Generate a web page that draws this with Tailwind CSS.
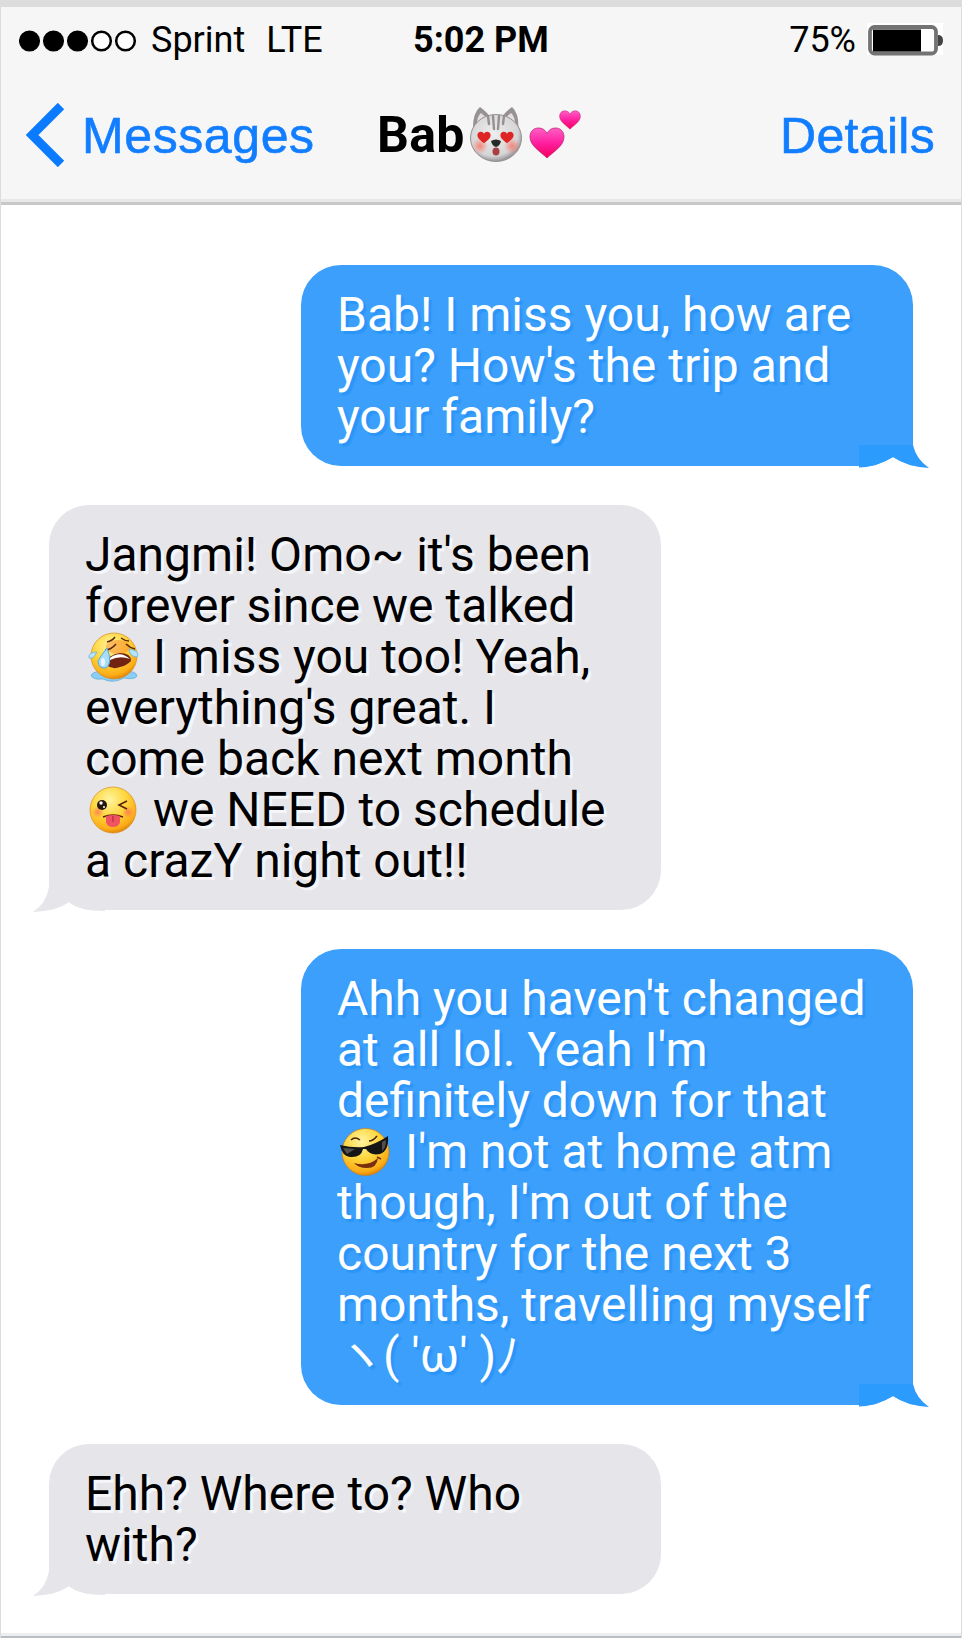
<!DOCTYPE html>
<html lang="en">
<head>
  <meta charset="UTF-8" />
  <meta name="viewport" content="width=device-width, initial-scale=1.0"/>
  <title>Messages - Bab</title>
  <script src="https://cdn.jsdelivr.net/npm/@tailwindcss/browser@4"></script>
</head>
<body class="bg-white text-black font-[Roboto,'Noto_Sans_CJK_JP',sans-serif]">

<!-- Shared gradients and shapes -->
<svg class="absolute w-0 h-0" aria-hidden="true">
  <defs>
    <radialGradient id="face" cx="42%" cy="28%" r="75%">
      <stop offset="0" stop-color="#fff5a0"/>
      <stop offset=".5" stop-color="#ffd53c"/>
      <stop offset=".85" stop-color="#fbac16"/>
      <stop offset="1" stop-color="#d97a08"/>
    </radialGradient>
    <radialGradient id="fur" cx="45%" cy="40%" r="60%">
      <stop offset="0" stop-color="#eeeeee"/>
      <stop offset=".8" stop-color="#d6d5d6"/>
      <stop offset="1" stop-color="#979395"/>
    </radialGradient>
    <radialGradient id="blush">
      <stop offset="0" stop-color="#ff6a5a" stop-opacity=".75"/>
      <stop offset="1" stop-color="#ff6a5a" stop-opacity="0"/>
    </radialGradient>
    <linearGradient id="pink" x1="0" y1="0" x2="0" y2="1">
      <stop offset="0" stop-color="#ff5fc6"/>
      <stop offset=".5" stop-color="#ff1fa0"/>
      <stop offset="1" stop-color="#f5005a"/>
    </linearGradient>
    <symbol id="heart" viewBox="0 0 36 32">
      <path d="M18 31C12 25 1 19 1 10C1 4 5 1 9.500 1C13.500 1 16.500 3 18 6.500C19.500 3 22.500 1 26.500 1C31 1 35 4 35 10C35 19 24 25 18 31Z"/>
    </symbol>
  </defs>
</svg>

<div class="flex h-[1638px] w-[962px] flex-col border-x border-[#dcdcdc]">

  <!-- Header -->
  <header class="flex h-[205px] flex-col border-t-[7px] border-b-[3px] border-t-[#dcdcdc] border-b-[#c8c8c8] bg-[#f6f6f6]">
    <!-- Status bar -->
    <div class="flex h-[65px] items-center pl-[18px] pr-[18px] text-[36px] leading-[65px]">
      <div class="flex w-[394px] items-center">
        <svg class="mt-[3px] h-[22px] w-[118px]" viewBox="0 0 118 22">
          <g stroke="#000" stroke-width="2.500">
            <circle cx="10.500" cy="11" r="9.300"/>
            <circle cx="34.500" cy="11" r="9.300"/>
            <circle cx="58.500" cy="11" r="9.300"/>
            <circle cx="82.500" cy="11" r="9.300" fill="#fff"/>
            <circle cx="106.500" cy="11" r="9.300" fill="#fff"/>
          </g>
        </svg>
        <span class="ml-[14px] mt-[2px]">Sprint</span>
        <span class="ml-[21px] mt-[2px]">LTE</span>
      </div>
      <span class="mt-[2px] font-bold">5:02 PM</span>
      <span class="ml-auto mt-[2px]">75%</span>
      <svg class="ml-[10px] h-[34px] w-[77px]" viewBox="0 0 77 34">
        <path d="M1 0H77V32H1Z" fill="#fff"/>
        <rect x="4" y="4" width="66" height="26.500" rx="4.500" fill="#fff" stroke="#737373" stroke-width="3.800"/>
        <path d="M7 6.500H55V28.500H7Z"/>
        <path d="M72 12Q77 12 77 17.500Q77 23 72 23Z" fill="#444"/>
      </svg>
    </div>
    <!-- Navigation bar -->
    <div class="flex h-[130px] items-center border-b-[3px] border-[#e8e8e8] pl-[25px] pr-[26px]">
      <a class="flex w-[351px] items-center text-[#117dff]">
        <svg class="-mt-[1px] h-[64px] w-[39px]" viewBox="0 0 39 64"><path d="M35 3L6 32L35 61" fill="none" stroke="#0a7aff" stroke-width="9"/></svg>
        <span class="ml-[17px] mt-[2px] font-['Liberation_Sans',sans-serif] text-[50px] tracking-[0.6px] [-webkit-text-stroke:0.6px_#117dff]">Messages</span>
      </a>
      <h1 class="flex items-center text-[50px] font-bold">
        <span class="tracking-[0.3px]">Bab</span>
        <svg class="-mt-[4px] ml-[4px] h-[58px] w-[54px]" viewBox="0 0 54 58">
          <path d="M4 28Q3 8 11 2Q17 6 24 15L30 15Q37 6 43 2Q51 9 49 28Z" fill="#989194"/>
          <path d="M8 20Q8 11 12 8Q16 11 18 14ZM46 20Q46 11 42 8Q38 11 36 14Z" fill="#e5dedf"/>
          <ellipse cx="27" cy="33" rx="25.500" ry="23.500" fill="url(#fur)" stroke="#969193"/>
          <path d="M19 11L20 19M24 11L25 24M30 11L29 24M35 11L34 19" stroke="#969093" stroke-width="2.400" stroke-linecap="round"/>
          <circle cx="11" cy="41" r="8" fill="url(#blush)"/><circle cx="43" cy="41" r="8" fill="url(#blush)"/>
          <use href="#heart" x="8" y="26" width="14" height="13" fill="#df2424"/>
          <use href="#heart" x="31" y="26" width="14" height="13" fill="#df2424"/>
          <path d="M22 36Q27 33 32 36Q31 41 27 42Q23 41 22 36Z" fill="#292929"/>
          <ellipse cx="27" cy="46.500" rx="3.500" ry="4" fill="#a93f43"/>
        </svg>
        <svg class="-mt-[4px] ml-[5px] h-[52px] w-[54px]" viewBox="0 0 54 52">
          <g fill="url(#pink)" stroke="#bd2877" stroke-width=".8">
            <use href="#heart" x="1" y="19" width="36" height="32"/>
            <use href="#heart" x="31" y="2" width="22" height="20"/>
          </g>
        </svg>
      </h1>
      <a class="ml-auto mt-[2px] font-['Liberation_Sans',sans-serif] text-[50px] tracking-[0.3px] text-[#117dff] [-webkit-text-stroke:0.6px_#117dff]">Details</a>
    </div>
  </header>

  <!-- Conversation -->
  <main class="flex flex-1 flex-col gap-[39px] border-b-2 border-[#b9bec2] px-[48px] pt-[60px] text-[48px] leading-[51px]">

    <div class="relative h-[201px] w-[612px] self-end rounded-[40px] rounded-br-none bg-[#3b9ffb] px-[36px] py-[24px] whitespace-nowrap text-white [text-shadow:3px_3px_1px_#2b95f8]">
      Bab! I miss you, how are<br>you? How's the trip and<br>your family?
      <svg class="absolute left-[558px] top-[180px] h-[24px] w-[71px]" viewBox="0 0 71 24">
        <path d="M0 22Q18 22 34 12Q49 22 70 23L70 24H0Z" fill="#fff"/>
        <path d="M0 0H54Q57 14 70 23Q49 22 34 12Q18 22 0 22.500Z" fill="#2b9bfd"/>
      </svg>
    </div>

    <div class="relative h-[405px] w-[612px] rounded-[40px] rounded-bl-none bg-[#e5e5ea] px-[36px] py-[24px] whitespace-nowrap [text-shadow:3px_3px_1px_#f6f6f8]">
      Jangmi! Omo~ it's been<br>forever since we talked<br><svg class="-my-[6px] ml-[3px] mr-[2px] inline-block h-[50px] w-[51px] align-[-3px]" viewBox="0 0 51 50">
        <path d="M3 43Q7 38 17 40Q26 42 35 40Q48 38 49 44Q47 48 36 46Q25 52 15 47Q4 48 3 43Z" fill="#8bcdf5" stroke="#5aa8da" stroke-width=".7"/>
        <circle cx="26" cy="24" r="23" fill="url(#face)" stroke="#d78b1c" stroke-width=".7"/>
        <ellipse cx="30" cy="15" rx="12" ry="7" fill="#fb7b20" opacity=".45"/>
        <path d="M19 10Q24 9 27 5M33 6Q37 9 41 9M17 18Q23 18 28 12M38 12Q42 16 47 17" fill="none" stroke="#5b2a08" stroke-width="1.500"/>
        <path d="M18 33Q20 22 32 21Q43 21 43 29Q38 34 32 35Q25 38 18 33Z" fill="#712412"/>
        <path d="M22 26Q32 18 42 27Q32 23 22 28Z" fill="#fff"/>
        <path d="M19 16Q25 31 18 36Q10 37 10 29Q12 25 19 16Z" fill="#a8dcf7" stroke="#57a9d7"/>
        <path d="M9 20Q0 20 1 26Q5 28 9 20ZM41 17Q42 25 49 25Q53 19 41 17Z" fill="#b5e4fb" stroke="#68b4dd" stroke-width=".8"/>
        <ellipse cx="15" cy="30" rx="2" ry="4" fill="#fff" opacity=".75"/>
      </svg> I miss you too! Yeah,<br>everything's great. I<br>come back next month<br><svg class="-my-[6px] ml-[3px] mr-[2px] inline-block h-[50px] w-[51px] align-[-3px]" viewBox="0 0 51 50">
        <circle cx="25" cy="25" r="23" fill="url(#face)" stroke="#d78b1c" stroke-width=".7"/>
        <circle cx="10" cy="27" r="6" fill="url(#blush)"/><circle cx="40" cy="27" r="6" fill="url(#blush)"/>
        <circle cx="14" cy="20" r="5" fill="#26180f"/><circle cx="13" cy="18" r="1.700" fill="#fff"/><circle cx="16" cy="22" r="1" fill="#fff"/>
        <path d="M39 16L31 20L39 24M15 32Q25 28 35 32" fill="none" stroke="#5b2308" stroke-width="1.600"/>
        <path d="M18 31Q25 29 32 31V37Q31 42 25 42Q19 42 18 37Z" fill="#f05461"/>
        <path d="M25 31V37" stroke="#b92b3b" stroke-width="1.200"/>
      </svg> we NEED to schedule<br>a crazY night out!!
      <svg class="absolute left-[-16px] top-[382px] h-[26px] w-[72px]" viewBox="0 0 72 26">
        <path d="M0 26Q23 24 36 15Q47 24 72 24V26Z" fill="#fff"/>
        <path d="M16 0Q13 17 0 25Q23 24 36 15Q47 24 72 24V0Z" fill="#e5e5ea"/>
      </svg>
    </div>

    <div class="relative h-[456px] w-[612px] self-end rounded-[40px] rounded-br-none bg-[#3b9ffb] px-[36px] py-[24px] whitespace-nowrap text-white [text-shadow:3px_3px_1px_#2b95f8]">
      Ahh you haven't changed<br>at all lol. Yeah I'm<br>definitely down for that<br><svg class="-my-[6px] ml-[3px] mr-[2px] inline-block h-[50px] w-[51px] align-[-3px]" viewBox="0 0 51 50">
        <circle cx="25.500" cy="25" r="23.500" fill="url(#face)" stroke="#c87e17" stroke-width=".7"/>
        <path d="M11 13Q15 9 20 13M29 14Q33 14 37 9" fill="none" stroke="#4b2506" stroke-width="1.500"/>
        <path d="M0 18Q13 21 24 20Q36 17 48 9Q49 24 40 27Q30 29 26 22L23 22Q21 31 10 30Q2 29 0 18Z" fill="#161616"/>
        <path d="M3 21L15 22L7 27ZM42 15L46 13Q46 21 42 24Z" fill="#696969" opacity=".7"/>
        <path d="M14 36Q28 40 38 31Q37 41 27 41Q18 41 14 36Z" fill="#7a2e0c"/>
        <path d="M37 30L41 32" stroke="#7a2e0c" stroke-width="1.500"/>
      </svg> I'm not at home atm<br>though, I'm out of the<br>country for the next 3<br>months, travelling myself<br><span class="-mr-[2px]">ヽ</span>( 'ω' )<span class="-ml-[1px]">ﾉ</span>
      <svg class="absolute left-[558px] top-[435px] h-[24px] w-[71px]" viewBox="0 0 71 24">
        <path d="M0 22Q18 22 34 12Q49 22 70 23L70 24H0Z" fill="#fff"/>
        <path d="M0 0H54Q57 14 70 23Q49 22 34 12Q18 22 0 22.500Z" fill="#2b9bfd"/>
      </svg>
    </div>

    <div class="relative h-[150px] w-[612px] rounded-[40px] rounded-bl-none bg-[#e5e5ea] px-[36px] py-[24px] whitespace-nowrap [text-shadow:3px_3px_1px_#f6f6f8]">
      Ehh? Where to? Who<br>with?
      <svg class="absolute left-[-16px] top-[127px] h-[26px] w-[72px]" viewBox="0 0 72 26">
        <path d="M0 26Q23 24 36 15Q47 24 72 24V26Z" fill="#fff"/>
        <path d="M16 0Q13 17 0 25Q23 24 36 15Q47 24 72 24V0Z" fill="#e5e5ea"/>
      </svg>
    </div>

    <div class="mt-auto -mx-[48px] h-[3px] bg-[#eeeeee]"></div>
  </main>
</div>

</body>
</html>
